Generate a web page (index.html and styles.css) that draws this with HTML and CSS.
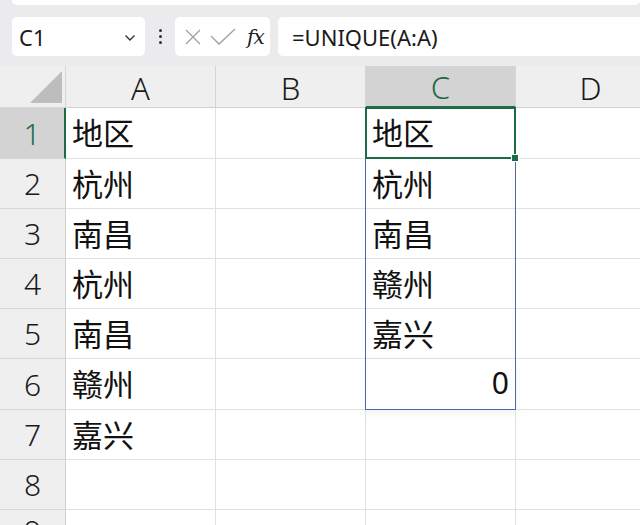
FILE: index.html
```html
<!DOCTYPE html>
<html lang="zh">
<head>
<meta charset="utf-8">
<title>UNIQUE</title>
<link rel="stylesheet" href="styles.css">
</head>
<body>
<div class="toolbar">
  <div class="ribbon-edge"></div>
  <div class="fbar">
    <div class="namebox">
      <span class="name">C1</span>
      <svg class="chev" width="12" height="8" viewBox="0 0 12 8"><path d="M1.5 1.5 L6 6 L10.5 1.5" fill="none" stroke="#333" stroke-width="1.4"/></svg>
    </div>
    <div class="dots"><i></i><i></i><i></i></div>
    <div class="fxbox">
      <svg width="18" height="18" viewBox="0 0 18 18"><path d="M2 2 L16 16 M16 2 L2 16" stroke="#a0a0a0" stroke-width="1.3" fill="none"/></svg>
      <svg width="26" height="18" viewBox="0 0 26 18"><path d="M1 8 L9 16 L25 1" stroke="#a0a0a0" stroke-width="1.3" fill="none"/></svg>
      <span class="fx">fx</span>
    </div>
    <div class="formula">=UNIQUE(A:A)</div>
  </div>
</div>
<div class="grid">
  <div class="corner"><svg width="34" height="34" viewBox="0 0 34 34"><path d="M33 1 L33 33 L1 33 Z" fill="#bdbdbd"/></svg></div>
  <div class="ch">A</div>
  <div class="ch">B</div>
  <div class="ch sel">C</div>
  <div class="ch">D</div>

  <div class="rh sel">1</div>
  <div class="c">地区</div><div class="c"></div><div class="c act">地区<span class="handle"></span></div><div class="c"></div>
  <div class="rh">2</div>
  <div class="c">杭州</div><div class="c"></div><div class="c sp">杭州</div><div class="c"></div>
  <div class="rh">3</div>
  <div class="c">南昌</div><div class="c"></div><div class="c sp">南昌</div><div class="c"></div>
  <div class="rh">4</div>
  <div class="c">杭州</div><div class="c"></div><div class="c sp">赣州</div><div class="c"></div>
  <div class="rh">5</div>
  <div class="c">南昌</div><div class="c"></div><div class="c sp">嘉兴</div><div class="c"></div>
  <div class="rh">6</div>
  <div class="c">赣州</div><div class="c"></div><div class="c sp last num">0</div><div class="c"></div>
  <div class="rh">7</div>
  <div class="c">嘉兴</div><div class="c"></div><div class="c"></div><div class="c"></div>
  <div class="rh">8</div>
  <div class="c"></div><div class="c"></div><div class="c"></div><div class="c"></div>
  <div class="rh">9</div>
  <div class="c"></div><div class="c"></div><div class="c"></div><div class="c"></div>
</div>
</body>
</html>
```
FILE: styles.css
```css
* { box-sizing: border-box; }
html, body { margin: 0; padding: 0; }
body {
  width: 640px;
  height: 525px;
  overflow: hidden;
  background: #fff;
  font-family: "Noto Sans", "Noto Sans CJK SC", sans-serif;
  color: #1a1a1a;
}
.toolbar {
  height: 66px;
  background: #ebebed;
  display: flex;
  flex-direction: column;
}
.ribbon-edge {
  height: 5px;
  margin-left: 12px;
  background: #fff;
  border-radius: 0 0 6px 6px;
}
.fbar {
  margin-top: 12px;
  height: 39px;
  display: flex;
  align-items: stretch;
}
.namebox {
  margin-left: 12px;
  width: 133px;
  background: #fff;
  border-radius: 5px;
  display: flex;
  align-items: center;
  justify-content: space-between;
  padding: 0 9px 0 7px;
}
.name { font-size: 22px; line-height: 1; }
.chev { margin-top: 3px; }
.dots {
  width: 30px;
  display: flex;
  flex-direction: column;
  align-items: center;
  justify-content: center;
  gap: 3px;
}
.dots i { width: 3px; height: 3px; border-radius: 50%; background: #333; display: block; }
.fxbox {
  width: 95px;
  background: #fff;
  border-radius: 5px;
  display: flex;
  align-items: center;
  padding-left: 9px;
  gap: 8px;
}
.fx {
  font-family: "DejaVu Serif", "Liberation Serif", serif;
  font-style: italic;
  font-size: 20px;
  color: #222;
  letter-spacing: -1px;
  margin-left: 3px;
}
.formula {
  margin-left: 8px;
  flex: 1;
  background: #fff;
  border-radius: 5px 0 0 5px;
  display: flex;
  align-items: center;
  padding-left: 14px;
  font-size: 22px;
}
.grid {
  display: grid;
  grid-template-columns: 66px 150px 150px 150px 150px;
  grid-template-rows: 42px 51px 50px 50px 50px 50px 51px 50px 50px 1fr;
  height: 459px;
  width: 640px;
  overflow: hidden;
}
.corner {
  background: #efefef;
  border-right: 1px solid #d6d6d6;
  border-bottom: 1px solid #d6d6d6;
  display: flex;
  align-items: flex-end;
  justify-content: flex-end;
  padding: 0 2px 3px 0;
}
.ch {
  background: #efefef;
  border-right: 1px solid #d6d6d6;
  border-bottom: 1px solid #d0d0d0;
  display: flex;
  align-items: center;
  justify-content: center;
  font-size: 31px;
  font-weight: 300;
  color: #1a1a1a;
  padding-top: 2px;
}
.ch.sel {
  background: #d3d3d3;
  color: #1f6b48;
  border-bottom: 2px solid #1f6b48;
}
.rh {
  background: #efefef;
  border-right: 1px solid #d0d0d0;
  border-bottom: 1px solid #d6d6d6;
  display: flex;
  align-items: center;
  justify-content: center;
  font-size: 30px;
  font-weight: 300;
  color: #1a1a1a;
}
.rh.sel {
  background: #d3d3d3;
  color: #1f6b48;
  border-right: 2px solid #1f6b48;
}
.c {
  border-right: 1px solid #e1e1e1;
  border-bottom: 1px solid #e1e1e1;
  display: flex;
  align-items: center;
  padding-left: 6px;
  padding-bottom: 3px;
  font-family: "Noto Sans CJK SC", sans-serif;
  font-size: 31px;
  color: #111;
  position: relative;
}
.c.num {
  justify-content: flex-end;
  padding-right: 6px;
  font-family: "Noto Sans", sans-serif;
  font-size: 30px;
  font-weight: 400;
}
.c.sp::after {
  content: "";
  position: absolute;
  left: -1px;
  right: -1px;
  top: 0;
  bottom: -1px;
  border-left: 1px solid #4a68b0;
  border-right: 1px solid #4a68b0;
  pointer-events: none;
}
.c.sp.last::after {
  border-bottom: 1px solid #4a68b0;
  box-shadow: 0 4px 8px rgba(0,0,0,0.05);
}
.c.act::after {
  content: "";
  position: absolute;
  left: -1px;
  right: -1px;
  top: -1px;
  bottom: -1px;
  border: 2px solid #1f6b48;
  pointer-events: none;
}
.handle {
  position: absolute;
  right: -4px;
  bottom: -4px;
  width: 6px;
  height: 6px;
  background: #1f6b48;
  border: 1px solid #fff;
  box-sizing: content-box;
  z-index: 2;
}
```
